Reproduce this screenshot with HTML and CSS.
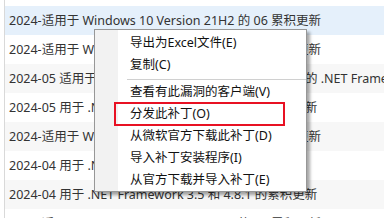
FILE: index.html
```html
<!DOCTYPE html>
<html lang="zh-CN">
<head>
    <meta charset="UTF-8">
    <title>补丁列表</title>
    <link rel="stylesheet" href="styles.css">
</head>
<body>
    <div class="patch-list">
        <div class="row">2024-适用于 Windows 10 Version 21H2 的 05 累积更新</div>
        <div class="row selected">2024-适用于 Windows 10 Version 21H2 的 06 累积更新</div>
        <div class="row">2024-适用于 Windows 10 Version 22H2 的 06 累积更新</div>
        <div class="row">2024-05 适用于 Windows 10 Version 21H2 和 22H2 的 .NET Framework 3.5 和 4.8.1 累积更新</div>
        <div class="row">2024-05 用于 .NET Framework 3.5 和 4.8.1 的累积更新</div>
        <div class="row">2024-适用于 Windows 11 Version 23H2 的 06 累积更新</div>
        <div class="row">2024-04 用于 .NET Framework 4.8 的累积更新</div>
        <div class="row">2024-04 用于 .NET Framework 3.5 和 4.8.1 的累积更新</div>
        <div class="row">2024-适用于 Windows 10 Version 22H2 的 05 累积更新</div>
    </div>

    <div class="context-menu">
        <div class="menu-item">导出为Excel文件(E)</div>
        <div class="menu-item">复制(C)</div>
        <div class="menu-sep"></div>
        <div class="menu-item">查看有此漏洞的客户端(V)</div>
        <div class="menu-item marked">分发此补丁(O)</div>
        <div class="menu-item">从微软官方下载此补丁(D)</div>
        <div class="menu-item">导入补丁安装程序(I)</div>
        <div class="menu-item">从官方下载并导入补丁(E)</div>
    </div>
</body>
</html>
```

FILE: styles.css
```css
:root {
    --text-color: #333;
    --row-alt: #f7f7f7;
    --row-selected: #e5f0fb;
    --menu-border: #979797;
    --mark-color: #e81123;
}

body {
    margin: 0;
    font-family: "Noto Sans", "Noto Sans CJK SC", sans-serif;
    font-size: 12.5px;
    color: var(--text-color);
    background: #fff;
    overflow: hidden;
}

.patch-list {
    margin-top: -23px;
    margin-left: 4px;
    border-left: 1px solid #d9d9d9;
}

.row {
    height: 29px;
    line-height: 29px;
    padding-left: 4px;
    white-space: nowrap;
}

.row:nth-child(odd) {
    background: #fff;
}

.row:nth-child(even) {
    background: var(--row-alt);
}

.row.selected {
    background: var(--row-selected);
}

/* 右键菜单 */
.context-menu {
    position: absolute;
    left: 94px;
    top: 29px;
    width: 211px;
    padding: 2px 0 0;
    background: #fff;
    border: 1px solid var(--menu-border);
    box-shadow: 3px 3px 3px rgba(0, 0, 0, 0.35);
    background-image: linear-gradient(to right, #f2f2f2 0, #f2f2f2 23px, #fff 23px);
}

.menu-item {
    height: 22px;
    line-height: 22px;
    padding-left: 35px;
    white-space: nowrap;
    color: #111;
}

.menu-item.marked {
    outline: 2px solid var(--mark-color);
    outline-offset: -1px;
    margin: 0 22px 0 20px;
    padding-left: 15px;
}

.menu-sep {
    height: 1px;
    margin: 3px 0 1px 32px;
    background: #d0d0d0;
}
```
